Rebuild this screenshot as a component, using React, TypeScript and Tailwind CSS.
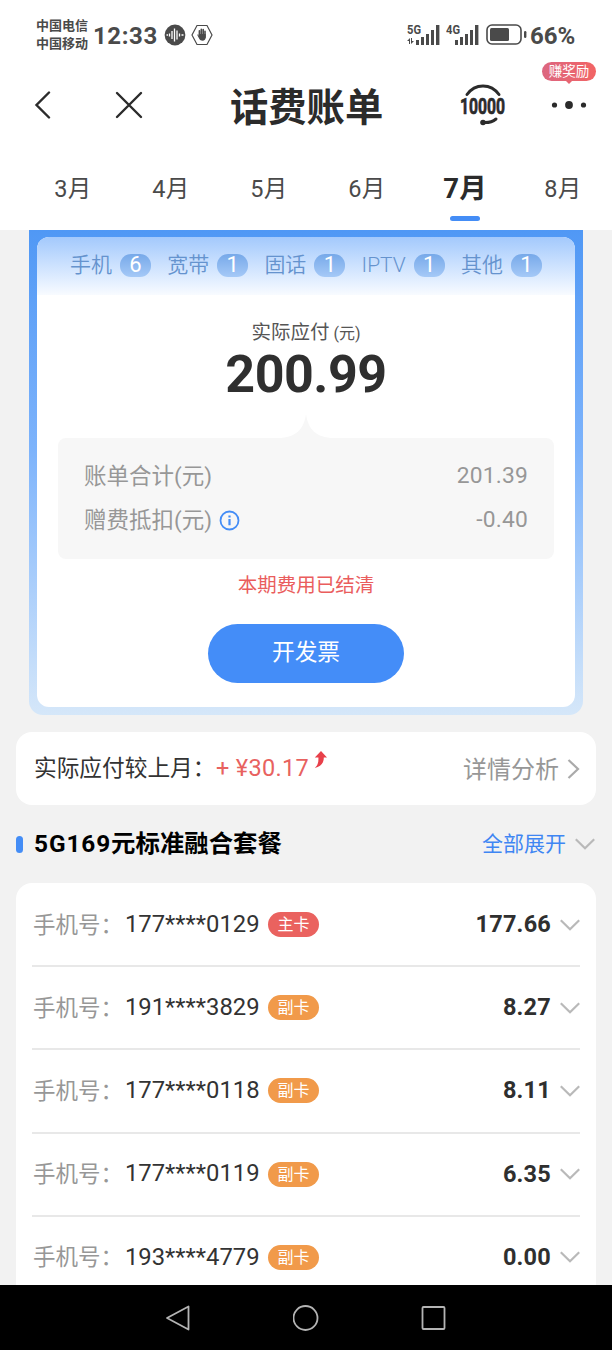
import type { ReactNode } from 'react';
import clsx from 'clsx';

interface PhoneLine {
  number: string;
  primary: boolean;
  amount: string;
}

const months = [3, 4, 5, 6, 7, 8];
const activeMonth = 7;

const services = [
  { name: '手机', count: 6 },
  { name: '宽带', count: 1 },
  { name: '固话', count: 1 },
  { name: 'IPTV', count: 1 },
  { name: '其他', count: 1 },
];

const phoneLines: PhoneLine[] = [
  { number: '177****0129', primary: true, amount: '177.66' },
  { number: '191****3829', primary: false, amount: '8.27' },
  { number: '177****0118', primary: false, amount: '8.11' },
  { number: '177****0119', primary: false, amount: '6.35' },
  { number: '193****4779', primary: false, amount: '0.00' },
];

function ChevronDown() {
  return (
    <svg className="h-3 w-5 shrink-0" viewBox="0 0 20 12" fill="none" stroke="#b9b9b9" strokeWidth="2.2">
      <path d="M.8 1.2 10 10.2l9.2-9" />
    </svg>
  );
}

function Signal({ label, data, className }: { label: string; data?: boolean; className?: string }) {
  return (
    <svg className={clsx('h-6 w-[34px]', className)} viewBox="0 0 34 24" fill="#4a4a4a">
      <text x="0" y="11" fontSize="12" fontWeight="700" textLength="14" lengthAdjust="spacingAndGlyphs">
        {label}
      </text>
      {data && <path d="M0 18l3-3v6H2v-3zM7 18l-3 3v-6h1v3z" />}
      <rect x="9" y="17" width="3" height="5" />
      <rect x="14" y="14" width="3" height="8" />
      <rect x="19" y="11" width="3" height="11" />
      <rect x="24" y="7" width="3" height="15" />
      <rect x="29" y="2" width="3.4" height="20" />
    </svg>
  );
}

function StatusBar() {
  return (
    <div className="flex h-[70px] items-center pl-9 text-[#4a4a4a]">
      <div className="w-[57px] text-[13px] leading-[18px] font-bold whitespace-nowrap">
        <div>中国电信</div>
        <div>中国移动</div>
      </div>
      <span className="w-[71px] pt-px text-[24px] leading-none font-bold tracking-[0.6px]">12:33</span>
      <svg className="h-[22px] w-[22px]" viewBox="0 0 22 22">
        <circle cx="11" cy="11" r="10.4" fill="#4a4a4a" />
        <path
          d="M2.500 11h1.500M5.500 9.500v3M8 7v8M10.500 4.500v13M13 6.500v9M15.500 9.500v3M17.500 11h2"
          stroke="#fff"
          strokeWidth="1.3"
        />
      </svg>
      <svg className="ml-[5px] h-[22px] w-[22px]" viewBox="0 0 22 22">
        <path d="M6 1.5h10L21 11l-5 9.5H6L1 11z" fill="none" stroke="#4a4a4a" strokeWidth="1.2" />
        <path d="M8.4 6.8v5M10.3 5.4v6M12.2 5.6v6M14 7.2v6" stroke="#4a4a4a" strokeWidth="1.6" strokeLinecap="round" />
        <path d="M6 10.5c1-.4 1.300.8 1.700 1.400V10h7v3.500c0 2-1.200 3.200-3.200 3.200-2.900 0-3.500-2.500-5.500-6.200z" fill="#4a4a4a" />
      </svg>
      <Signal label="5G" data className="ml-[194px]" />
      <Signal label="4G" className="ml-[5px]" />
      <svg className="ml-[6px] h-[22px] w-[41px]" viewBox="0 0 41 22" fill="none">
        <rect x="1" y="1" width="34" height="19" rx="5" stroke="#4a4a4a" strokeWidth="1.6" />
        <rect x="4" y="4" width="19" height="13" rx="1.5" fill="#4a4a4a" />
        <rect x="38" y="7" width="2.4" height="7" rx="1.2" fill="#4a4a4a" />
      </svg>
      <span className="ml-[3px] pt-px text-2xl leading-none font-bold">66%</span>
    </div>
  );
}

function NavBar() {
  return (
    <div className="relative flex h-[70px] items-center text-[#2b2b2b]">
      <svg className="ml-[34px] h-7 w-[18px]" viewBox="0 0 18 28" fill="none" stroke="currentColor" strokeWidth="2.4" strokeLinecap="round">
        <path d="M15 1.500 2.500 14 15 26.500" />
      </svg>
      <svg className="ml-[63px] h-7 w-7" viewBox="0 0 28 28" fill="none" stroke="currentColor" strokeWidth="2.4" strokeLinecap="round">
        <path d="M2 2l24 24M26 2 2 26" />
      </svg>
      <h1 className="ml-[87px] w-[154px] pt-[5px] text-[38.3px] leading-[52px] font-bold whitespace-nowrap">话费账单</h1>
      <svg className="ml-[76px] h-11 w-[46px] overflow-visible" viewBox="0 0 46 44" fill="none" stroke="currentColor">
        <path d="M7 11.500C15 0 31 0 39 11.500" strokeWidth="3" strokeLinecap="round" />
        <text
          x="0"
          y="31"
          fontSize="22"
          fontWeight="700"
          fill="currentColor"
          stroke="currentColor"
          strokeWidth=".7"
          textLength="45"
          lengthAdjust="spacingAndGlyphs"
        >
          10000
        </text>
        <path d="M23 39.500c6 .5 10-1 13-3.500" strokeWidth="3" strokeLinecap="round" />
        <circle cx="23" cy="39.500" r="2.800" fill="currentColor" stroke="none" />
      </svg>
      <svg className="ml-[45px] h-2 w-9" viewBox="0 0 36 8" fill="currentColor">
        <circle cx="3.500" cy="4" r="2.600" />
        <circle cx="18" cy="4" r="3.900" />
        <circle cx="32.500" cy="4" r="2.600" />
      </svg>
      {/* reward bubble above the menu dots */}
      <div className="absolute top-[-8px] right-4 flex h-[19px] w-[54px] items-center justify-center rounded-full bg-linear-to-r from-[#dc6680] to-[#f26464] pt-px text-[13.5px] leading-none text-white">
        赚奖励
        <svg className="absolute top-[18px] left-[23px] h-1 w-2" viewBox="0 0 8 4" fill="#e76571">
          <path d="M0 0h8L4 4z" />
        </svg>
      </div>
    </div>
  );
}

function MonthTabs() {
  return (
    <div className="flex h-[90px] w-[700px] pl-6">
      {months.map((m) => (
        <div key={m} className="flex w-[98px] flex-col items-center pt-[31px] text-[#4a4a4a]">
          <span
            className={clsx(
              'h-9 leading-9 whitespace-nowrap',
              m === activeMonth ? 'text-[27.5px] font-bold text-[#2b2b2b]' : 'text-[23.5px] tracking-[0.5px]',
            )}
          >
            {m}月
          </span>
          {m === activeMonth && <span className="mt-[9px] h-[5px] w-[30px] rounded-full bg-[#448df6]" />}
        </div>
      ))}
    </div>
  );
}

function SummaryRow({ label, value, children }: { label: string; value: string; children?: ReactNode }) {
  return (
    <div className="flex h-11 items-center">
      <span className="w-[129px] pt-[2px] text-[22.5px] whitespace-nowrap">{label}</span>
      {children}
      <span className="ml-auto pt-px text-[22.8px] tracking-[0.2px]">{value}</span>
    </div>
  );
}

function BillCard() {
  return (
    <section className="mx-[29px] h-[485px] rounded-b-[14px] bg-linear-to-b from-[#5098f5] via-[#7db3fb] via-45% to-[#d5e7f9] px-2 pt-[7px] pb-2">
      <div className="flex h-full flex-col items-center rounded-xl bg-white">
        <div className="flex h-[58px] w-full justify-between rounded-t-xl bg-linear-to-b from-[#a3c9fc] to-[#f8fbff] px-[33px] text-[21px] leading-[56px] text-[#6593ce]">
          {services.map((s) => (
            <div key={s.name} className="flex h-14 items-center gap-2 font-[350]">
              <span>{s.name}</span>
              <span className="h-[23px] w-[31px] rounded-[11px] bg-linear-to-b from-[#77a9e9] to-[#a5c9f7] text-center text-[22px] leading-[22px] font-normal text-white">
                {s.count}
              </span>
            </div>
          ))}
        </div>
        <div className="mt-6 h-7 text-[19.5px] leading-7 text-[#555]">
          实际应付<span className="ml-1 text-[16px]">(元)</span>
        </div>
        <div className="h-[57px] text-[52px] leading-[55px] font-bold tracking-[-0.5px] text-[#2f2f2f]">200.99</div>
        <svg className="mt-[10px] h-6 w-14" viewBox="0 0 56 24" fill="#f7f7f7">
          <path d="M0 24C18 24 26 15 28 0c2 15 10 24 28 24z" />
        </svg>
        <div className="h-[121px] w-[496px] rounded-lg bg-[#f7f7f7] px-[26px] pt-4 text-[#979797]">
          <SummaryRow label="账单合计(元)" value="201.39" />
          <SummaryRow label="赠费抵扣(元)" value="-0.40">
            <svg className="ml-[6px] h-[21px] w-[21px]" viewBox="0 0 21 21" fill="none" stroke="#448df6" strokeWidth="1.8">
              <circle cx="10.500" cy="10.500" r="9" />
              <path d="M10.500 9v6.200M10.500 5.400v2.200" strokeWidth="2.2" />
            </svg>
          </SummaryRow>
        </div>
        <div className="mt-[13px] h-7 text-[19.5px] leading-7 text-[#ea5d5d]">本期费用已结清</div>
        <button className="mt-6 h-[59px] w-[196px] rounded-full bg-[#448df8] pb-px text-[22.7px] text-white">
          开发票
        </button>
      </div>
    </section>
  );
}

function CompareCard() {
  return (
    <section className="mx-4 mt-[17px] flex h-[73px] items-center rounded-2xl bg-white pr-4 pl-[18px]">
      <span className="w-[182px] pt-[2px] text-[22.7px] whitespace-nowrap text-[#333]">实际应付较上月：</span>
      <span className="text-[23.5px] tracking-[0.3px] text-[#e8625f]">+ ¥30.17</span>
      <svg className="mb-[18px] ml-[5px] h-[17px] w-[13px]" viewBox="0 0 13 17" fill="#e8404a">
        <path d="M7 0l6 6.500H9.800C9.800 12 7 15.500 .8 17 4 14 4.600 11 4.400 6.500H.8z" />
      </svg>
      <span className="ml-auto pt-[2px] text-[24px] text-[#979797]">详情分析</span>
      <svg className="ml-2 h-5 w-[13px]" viewBox="0 0 13 20" fill="none" stroke="#aaa" strokeWidth="2.2">
        <path d="M1.500 1l9.500 9-9.500 9" />
      </svg>
    </section>
  );
}

function PhoneRow({ line }: { line: PhoneLine }) {
  return (
    <div className="flex h-[83.2px] items-center border-b-2 border-[#e8e8e8]">
      <span className="w-[93px] pt-[2px] pl-px text-[22.5px] whitespace-nowrap text-[#979797]">手机号：</span>
      <span className="w-[143px] text-[23.8px] text-[#333]">{line.number}</span>
      <span
        className={clsx(
          'h-[25px] w-[51px] rounded-full text-center text-[16px] leading-[25px] text-white',
          line.primary ? 'bg-[#ea625f]' : 'bg-[#f19a4a]',
        )}
      >
        {line.primary ? '主卡' : '副卡'}
      </span>
      <span className="mr-[9px] ml-auto text-[23.5px] font-bold tracking-[0.2px] text-[#2f2f2f]">{line.amount}</span>
      <ChevronDown />
    </div>
  );
}

function SystemNav() {
  return (
    <nav className="flex h-[65px] shrink-0 items-center justify-center gap-[102px] bg-black">
      <svg className="h-[26px] w-[26px]" viewBox="0 0 26 26" fill="none" stroke="#b4b4b4" strokeWidth="1.8" strokeLinejoin="round">
        <path d="M2 13 23.500 1.500v23z" />
      </svg>
      <svg className="h-[26px] w-[26px]" viewBox="0 0 26 26" fill="none" stroke="#b4b4b4" strokeWidth="1.8">
        <circle cx="12.500" cy="13" r="12" />
      </svg>
      <svg className="h-[26px] w-[26px]" viewBox="0 0 26 26" fill="none" stroke="#b4b4b4" strokeWidth="1.8">
        <rect x="1.500" y="2" width="22" height="22" rx="1" />
      </svg>
    </nav>
  );
}

export default function App() {
  return (
    <div className="flex h-[1350px] w-[612px] flex-col overflow-hidden bg-[#f2f2f2] font-[Roboto,'Noto_Sans_CJK_SC',sans-serif]">
      <header className="h-[230px] shrink-0 overflow-hidden bg-white">
        <StatusBar />
        <NavBar />
        <MonthTabs />
      </header>
      <main className="min-h-0 flex-1 overflow-hidden">
        <BillCard />
        <CompareCard />
        <div className="flex h-[78px] items-center pr-[17px] pl-4">
          <span className="h-[17px] w-[7px] rounded-full bg-[#448df6]" />
          <h2 className="ml-[11px] pt-px text-[24.4px] font-bold text-black">
            <span className="tracking-[0.9px]">5G169</span>元标准融合套餐
          </h2>
          <span className="mr-[9px] ml-auto pt-px text-[21px] text-[#3f86f3]">全部展开</span>
          <ChevronDown />
        </div>
        <section className="mx-4 rounded-t-2xl bg-white px-4 pt-px">
          {phoneLines.map((line) => (
            <PhoneRow key={line.number} line={line} />
          ))}
        </section>
      </main>
      <SystemNav />
    </div>
  );
}
